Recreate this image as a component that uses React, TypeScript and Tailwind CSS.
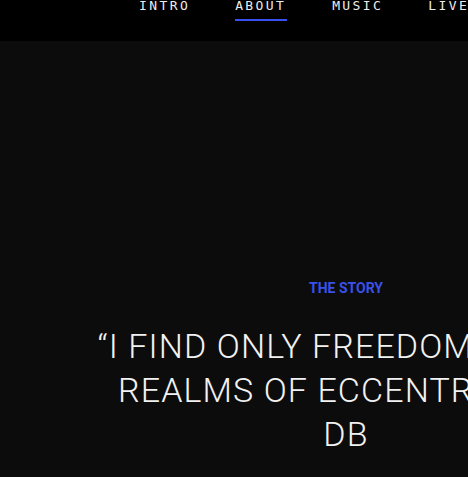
const navItems = ["INTRO", "ABOUT", "MUSIC", "LIVE", "VIDEO", "CONTACT"];

function Nav() {
  return (
    <nav className="h-[41px] bg-black">
      <ul className="flex gap-[45px] pl-[139px]">
        {navItems.map((item) => (
          <li key={item} className="flex flex-col items-start">
            <span className="font-['DejaVu_Sans_Mono',monospace] text-[13px] leading-[11px] tracking-[2.4px] text-[#ececec]">
              {item}
            </span>
            {item === "ABOUT" && (
              <span className="mt-[8px] h-[2px] w-[52px] bg-[#3a4ff0]" />
            )}
          </li>
        ))}
      </ul>
    </nav>
  );
}

export default function App() {
  return (
    <div className="min-h-[477px] w-[692px] bg-[#0c0c0c]">
      <Nav />
      <section className="flex flex-col items-center pt-[239px] text-center">
        <p className="font-['Roboto',sans-serif] text-[14px] font-bold leading-[17px] text-[#3a50ea]">
          THE STORY
        </p>
        <blockquote className="mt-[27px] font-['Roboto',sans-serif] text-[34px] font-light uppercase leading-[44px] tracking-[1.1px] text-[#f2f2f2]">
          “I find only freedom in the
          <br />
          realms of eccentricity.”
          <br />
          DB
        </blockquote>
      </section>
    </div>
  );
}
